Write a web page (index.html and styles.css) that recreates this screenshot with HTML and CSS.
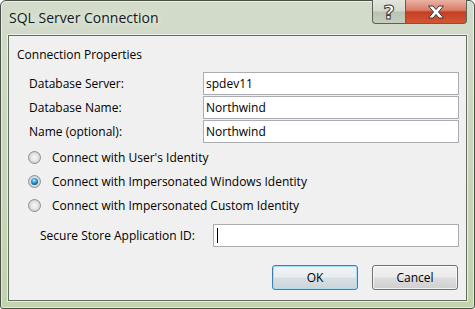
FILE: index.html
```html
<!DOCTYPE html>
<html lang="en">
<head>
    <meta charset="UTF-8">
    <meta name="viewport" content="width=device-width, initial-scale=1.0">
    <title>SQL Server Connection</title>
    <link rel="stylesheet" href="styles.css">
</head>
<body>

<div class="window">
    <!-- Title bar -->
    <div class="titlebar">
        <span class="title">SQL Server Connection</span>
        <div class="caption-buttons">
            <span class="cap-btn help">?</span>
            <span class="cap-btn close">
                <svg width="18" height="14" viewBox="0 0 18 14">
                    <path d="M1.5 1h4.6L9 4.6 11.9 1h4.6l-5 6 5 6h-4.6L9 9.4 6.1 13H1.5l5-6z" fill="#fff" stroke="#3a3a3a" stroke-width="1" stroke-linejoin="round"/>
                </svg>
            </span>
        </div>
    </div>

    <!-- Client area -->
    <div class="client">
        <div class="group-title">Connection Properties</div>

        <div class="fields">
            <label>Database Server:</label>
            <div class="textbox">spdev11</div>
            <label>Database Name:</label>
            <div class="textbox">Northwind</div>
            <label>Name (optional):</label>
            <div class="textbox">Northwind</div>
        </div>

        <div class="radios">
            <div class="radio-row"><span class="radio"></span>Connect with User's Identity</div>
            <div class="radio-row"><span class="radio checked"></span>Connect with Impersonated Windows Identity</div>
            <div class="radio-row"><span class="radio"></span>Connect with Impersonated Custom Identity</div>
        </div>

        <div class="secure-row">
            <label>Secure Store Application ID:</label>
            <div class="textbox"><span class="caret"></span></div>
        </div>

        <div class="buttons">
            <button class="btn default">OK</button>
            <button class="btn">Cancel</button>
        </div>
    </div>
</div>

</body>
</html>
```

FILE: styles.css
```css
/* window frame */
body {
    margin: 0;
    padding: 0;
    font-family: "Open Sans", "Noto Sans", sans-serif;
    font-size: 12px;
    color: #000;
}

.window {
    box-sizing: border-box;
    width: 475px;
    height: 309px;
    display: flex;
    flex-direction: column;
    border: 1px solid #4a5046;
    border-radius: 6px 6px 3px 3px;
    background: linear-gradient(180deg, #d3dccb 0%, #cbd6c0 40%, #c3d3ac 100%);
    box-shadow: inset 0 0 0 1px rgba(255, 255, 255, 0.55);
}

.titlebar {
    height: 34px;
    display: flex;
    align-items: flex-start;
    justify-content: space-between;
}

.title {
    margin: 7px 0 0 8px;
    font-size: 14px;
    line-height: 20px;
    color: #101820;
    text-shadow: 0 0 6px rgba(255, 255, 255, 0.9);
}

.caption-buttons {
    display: flex;
    margin-right: 7px;
    margin-top: -1px;
}

.cap-btn {
    box-sizing: border-box;
    height: 24px;
    display: flex;
    align-items: center;
    justify-content: center;
    border: 1px solid #5b6357;
    border-top: none;
}

.help {
    width: 33px;
    border-right: none;
    border-radius: 0 0 0 4px;
    background: linear-gradient(180deg, #e2e6de 0%, #d3d9cc 48%, #bac3b1 52%, #c6cfbd 100%);
    font-family: "DejaVu Sans", sans-serif;
    font-weight: bold;
    font-size: 20px;
    line-height: 24px;
    color: #fff;
    -webkit-text-stroke: 1px #3c3c3c;
}

.close {
    width: 62px;
    border-radius: 0 0 4px 0;
    background: linear-gradient(180deg, #eab2a4 0%, #d97a64 45%, #c63f22 52%, #d25634 100%);
}

/* dialog body */
.client {
    flex: 1;
    margin: 0 7px 7px 7px;
    background-color: #f0f0f0;
    border: 1px solid #656d62;
    box-shadow: 0 0 0 1px rgba(255, 255, 255, 0.6);
}

.group-title {
    margin: 9px 0 0 8px;
    line-height: 20px;
}

.fields {
    display: grid;
    grid-template-columns: 174px 1fr;
    grid-auto-rows: 23px;
    row-gap: 1px;
    margin-top: 7px;
    padding: 0 7px 0 20px;
    align-items: center;
}

.textbox {
    box-sizing: border-box;
    height: 23px;
    background-color: #fff;
    border: 1px solid #abadb3;
    padding: 0 2px;
    line-height: 21px;
    display: flex;
    align-items: center;
}

.radios {
    margin-top: 2px;
    padding-left: 19px;
}

.radio-row {
    height: 24px;
    display: flex;
    align-items: center;
}

.radio {
    box-sizing: border-box;
    width: 13px;
    height: 13px;
    margin-right: 11px;
    border-radius: 50%;
    border: 1px solid #8d8f91;
    background: radial-gradient(circle at 50% 50%, #f7f7f7 0%, #e6e6e6 45%, #cfcfcf 70%, #f4f4f4 100%);
    display: flex;
    align-items: center;
    justify-content: center;
}

.radio.checked::after {
    content: "";
    width: 7px;
    height: 7px;
    border-radius: 50%;
    background: radial-gradient(circle at 45% 35%, #bff0ff 0%, #3aa6e0 35%, #11568e 75%, #0b3a66 100%);
}

.secure-row {
    display: flex;
    align-items: center;
    margin-top: 7px;
    padding: 0 7px 0 31px;
}

.secure-row label {
    width: 173px;
}

.secure-row .textbox {
    flex: 1;
}

.caret {
    width: 1px;
    height: 15px;
    background-color: #000;
    margin-left: 1px;
}

.buttons {
    display: flex;
    justify-content: flex-end;
    gap: 14px;
    margin-top: 18px;
    padding-right: 8px;
}

.btn {
    box-sizing: border-box;
    width: 86px;
    height: 25px;
    font-family: "Open Sans", "Noto Sans", sans-serif;
    font-size: 12px;
    color: #000;
    border: 1px solid #707070;
    border-radius: 3px;
    background: linear-gradient(180deg, #f2f2f2 0%, #ebebeb 48%, #dddddd 52%, #cfcfcf 100%);
    box-shadow: inset 0 0 0 1px rgba(255, 255, 255, 0.7);
    padding: 0;
}

.btn.default {
    border-color: #3c7fb1;
    box-shadow: inset 0 0 0 1px #a9dcf5;
    background: linear-gradient(180deg, #f1f4f6 0%, #e8edf0 48%, #d8dfe3 52%, #cdd5da 100%);
}
```
